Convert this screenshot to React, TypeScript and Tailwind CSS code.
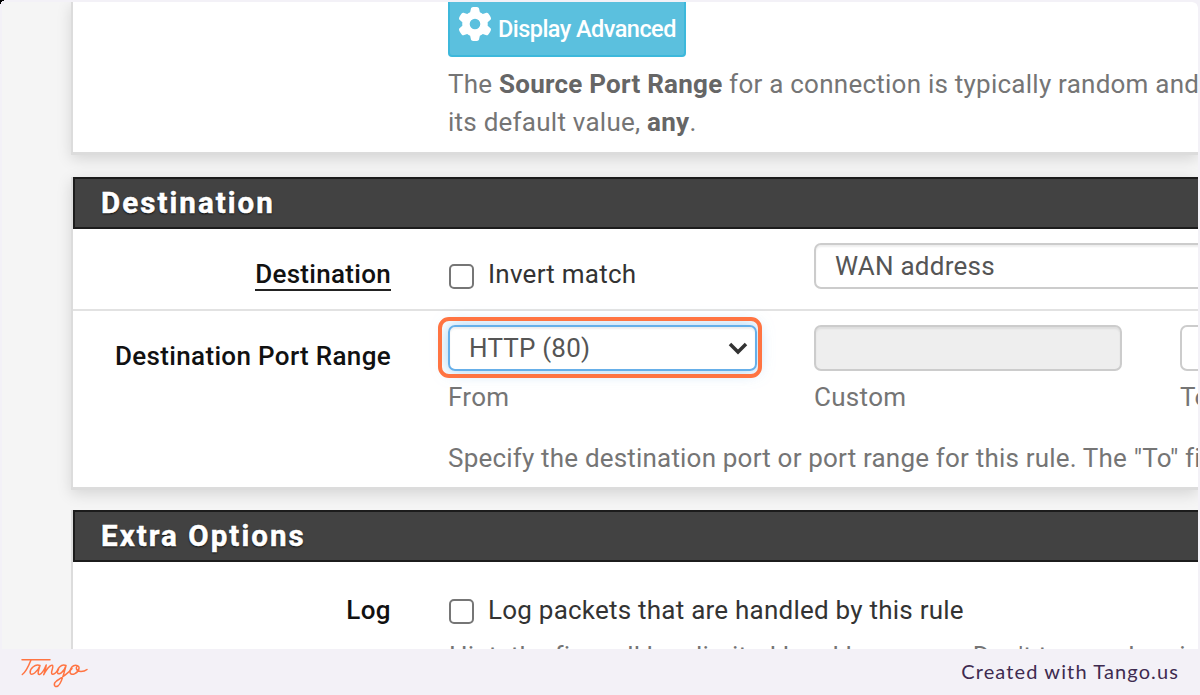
import type { ReactNode } from 'react';
import { FaGear } from 'react-icons/fa6';

function Checkbox() {
  return <span className="mr-[13px] block size-[25px] shrink-0 rounded-[5px] border-2 border-[#767676] bg-white" />;
}

function Heading({ children }: { children: ReactNode }) {
  return (
    <h2 className="flex h-[52px] shrink-0 items-center border-2 border-r-0 border-[#1c1c1c] bg-[#424242] pl-[26px] text-[29.5px] leading-[34px] font-bold tracking-[2.05px] text-white [-webkit-text-stroke:0.5px_white] [text-shadow:0_1px_2px_#000]">
      {children}
    </h2>
  );
}

function TangoLogo() {
  return (
    <svg className="h-[34px] w-[70px]" viewBox="0 0 70 34" fill="none" stroke="#ff7442" strokeWidth="1.5" strokeLinecap="round" strokeLinejoin="round">
      <path d="M2 4.7H30M11 5C9 10 6 17 2.3 19.5" />
      <path d="M20 10.5C15 8.5 9.5 14 10.2 17.8C11 22 18 16.5 20 10.5C18.5 15 17 20 19.5 19.5C23 18.5 24.5 14 26.2 10C26 14 24.5 17 23.7 19.8C26 15 30 9.5 32.2 10.2C34.7 11 29.5 18.5 32.5 19.3C34.5 19.5 37 16.5 38.5 14.5" />
      <path d="M46 10.5C41 8.5 36.8 14 37.4 17.5C38.5 21.5 44.5 16 46 10.5C44 18 42 28 38 31C34 33 33 28.5 36.5 26C42 22.5 48.5 18 52 13.5" />
      <path d="M57.5 10.6C53 8.8 49.5 14 50 17.5C51 21.5 58 18.5 59 13.5C59.5 10 55.5 10.5 56.5 14C57.5 17.5 64 17 67 14.5" />
    </svg>
  );
}

export default function App() {
  return (
    <div className="relative flex h-[695px] w-[1200px] flex-col overflow-hidden bg-[#f3f1f7] pt-[2px] font-[Roboto,sans-serif] text-[26px] leading-[38px] whitespace-nowrap text-[#757575]">
      <svg className="absolute top-0 left-0 size-[4px]" viewBox="0 0 4 4"><path d="M0 0H4V1H2V2H1V4H0Z" fill="#000" /></svg>
      <main className="mx-[2px] flex h-[647px] shrink-0 flex-col overflow-hidden rounded-t-[6px] bg-[#f5f5f5] pl-[69px]">
        <section className="h-[153px] shrink-0 border-b-3 border-l-2 border-[#dcdcdc] bg-white pl-[375px] shadow-[0_4px_14px_rgba(0,0,0,0.13)]">
          <div className="flex h-[55px] w-[238px] rounded-b-[4px] border-2 border-t-0 border-[#3db8db] bg-[#5bc0de] pl-[8px] text-white">
            <FaGear className="mt-[5px] size-[34px] shrink-0" />
            <span className="mt-[8px] ml-[6px] text-[23.5px] font-medium tracking-[-0.55px]">Display Advanced</span>
          </div>
          <p className="mt-[8px] tracking-[0.24px]">
            The <b className="font-bold text-[#666]">Source Port Range</b> for a connection is typically random and<br />
            its default value, <b className="font-bold text-[#666]">any</b>.
          </p>
        </section>

        <section className="mt-[22px] flex h-[313px] shrink-0 flex-col border-b-3 border-l-2 border-[#dcdcdc] bg-white shadow-[0_4px_14px_rgba(0,0,0,0.13)]">
          <Heading>Destination</Heading>
          <div className="flex h-[82px] shrink-0 border-b-2 border-[#e2e2e2] text-[#333]">
            <div className="w-[318px] shrink-0 pt-[26px] text-right font-medium tracking-[0.3px] text-[#111]">
              <span className="inline-block border-b-2 border-[#222] leading-[30px]">Destination</span>
            </div>
            <div className="ml-[58px] flex w-[365px] shrink-0 pt-[26px]">
              <div className="pt-[9px] pr-px"><Checkbox /></div>
              <span className="tracking-[0.25px]">Invert match</span>
            </div>
            <div className="mt-[14px] h-[46px] w-[400px] shrink-0 rounded-[7px] border-2 border-[#ccc] pl-[19px] leading-[43px] tracking-[0.25px] text-[#555] shadow-[inset_0_2px_2px_rgba(0,0,0,0.07)]">WAN address</div>
          </div>
          <div className="flex pt-[14px]">
            <div className="w-[318px] shrink-0 pt-[12px] text-right font-medium tracking-[0.33px] text-[#111]">Destination Port Range</div>
            <div className="ml-[57px] shrink-0">
              <div className="flex">
                <div className="w-[366px]">
                  <div className="relative flex h-[46px] w-[309px] items-center justify-between rounded-[7px] border-2 border-[#66afe9] pr-[7px] pl-[19px] tracking-[0.2px] text-[#555] shadow-[inset_0_2px_2px_rgba(0,0,0,0.07),0_0_16px_rgba(102,175,233,0.6)]">
                    HTTP (80)
                    <svg className="h-[14px] w-[20px]" viewBox="0 0 20 14" fill="none" stroke="#333" strokeWidth="3.5"><path d="m2 3 8 8 8-8" /></svg>
                    <div className="pointer-events-none absolute -top-[10px] -right-[7px] -bottom-[9px] -left-[12px] rounded-[11px] border-4 border-[#ff7442]" />
                  </div>
                  <div className="mt-[7px] tracking-[0.3px]">From</div>
                </div>
                <div className="w-[366px]">
                  <div className="h-[46px] w-[308px] rounded-[7px] border-2 border-[#ccc] bg-[#eee] shadow-[inset_0_2px_2px_rgba(0,0,0,0.07)]" />
                  <div className="mt-[7px] tracking-[0.3px]">Custom</div>
                </div>
                <div>
                  <div className="h-[46px] w-[309px] rounded-[7px] border-2 border-[#ccc]" />
                  <div className="mt-[7px] tracking-[0.3px]">To</div>
                </div>
              </div>
              <p className="mt-[23px] tracking-[0.19px]">Specify the destination port or port range for this rule. The "To" field</p>
            </div>
          </div>
        </section>

        <section className="mt-[20px] flex h-[160px] shrink-0 flex-col border-l-2 border-[#dcdcdc] bg-white">
          <Heading>Extra Options</Heading>
          <div className="flex pt-[29px]">
            <div className="w-[318px] shrink-0 text-right font-medium tracking-[0.4px] text-[#111]">Log</div>
            <div className="ml-[58px] shrink-0 text-[#333]">
              <div className="flex"><div className="pt-[8px] pr-px"><Checkbox /></div><span className="tracking-[0.23px]">Log packets that are handled by this rule</span></div>
              <p className="mt-[8px] tracking-[0.2px] text-[#757575]">Hint: the firewall has limited local log space. Don't turn on logging</p>
            </div>
          </div>
        </section>
      </main>
      <footer className="flex h-[46px] shrink-0 items-center justify-between pr-[21px] pl-[20px]">
        <TangoLogo />
        <span className="-mt-[3px] font-[Lato,sans-serif] text-[20px] tracking-[1.12px] text-[#3e2b50]">Created with Tango.us</span>
      </footer>
    </div>
  );
}
